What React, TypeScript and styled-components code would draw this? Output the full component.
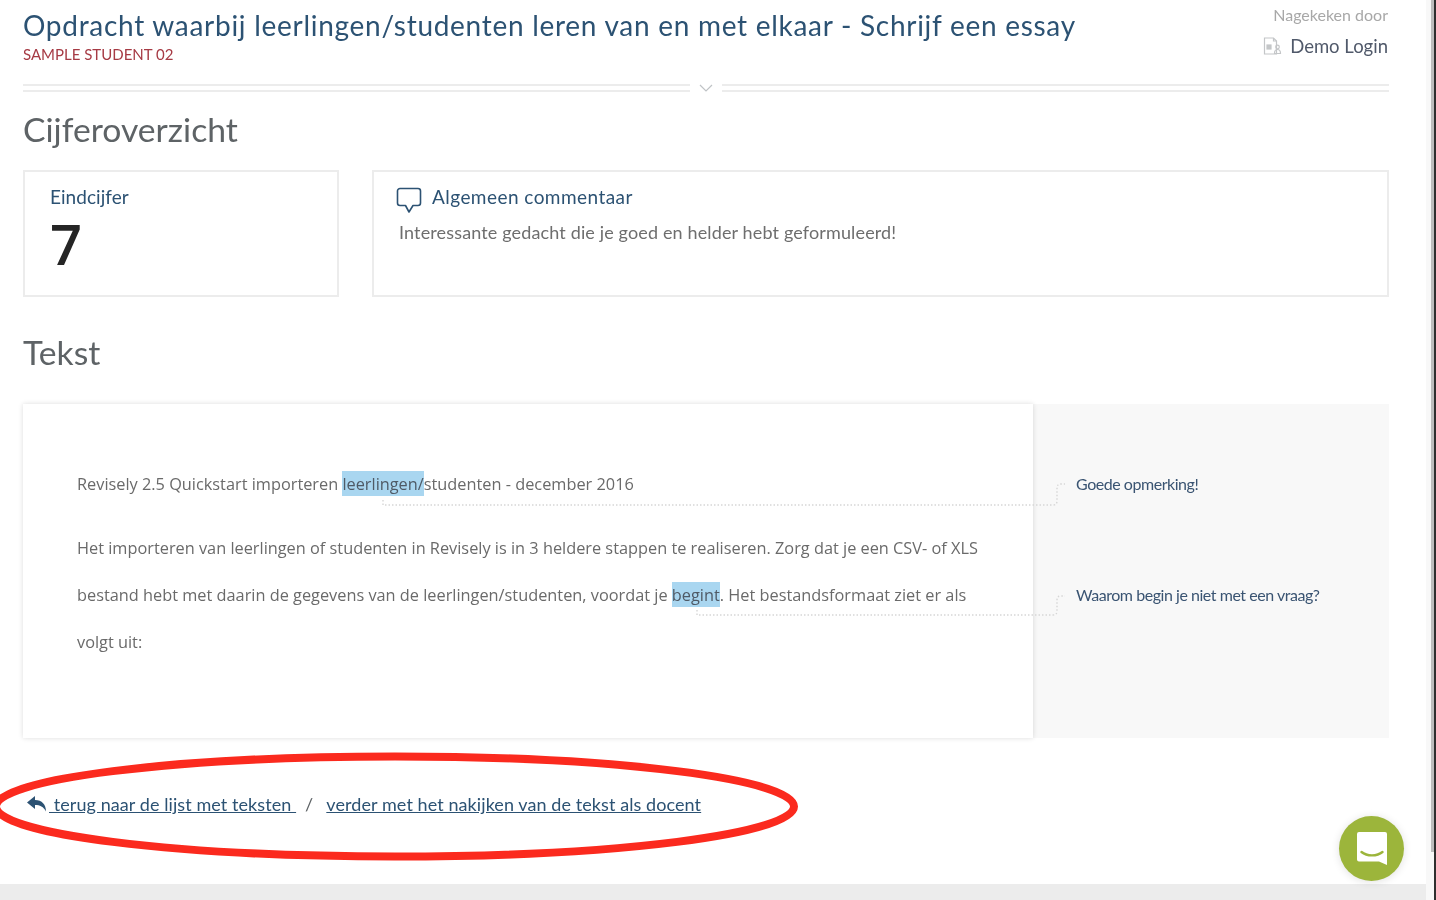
import styled, { createGlobalStyle } from "styled-components";

const GlobalStyle = createGlobalStyle`
  html, body {
    margin: 0;
    padding: 0;
    height: 100%;
    overflow: hidden;
    background: #ffffff;
    font-family: "Lato", "Liberation Sans", sans-serif;
  }
`;

const Screen = styled.div`
  position: relative;
  display: flex;
  width: 1436px;
  height: 900px;
  overflow: hidden;
  background: #ffffff;
  filter: blur(0.45px);
`;

const Page = styled.div`
  display: flex;
  flex-direction: column;
  width: 1426px;
  height: 900px;
`;

const Scrollbar = styled.div`
  box-sizing: border-box;
  width: 8px;
  padding-left: 5px;
  background: #f8f8f8;
`;

const ScrollThumb = styled.div`
  width: 3px;
  height: 852px;
  background: #bdbdbd;
`;

const WindowEdge = styled.div`
  width: 2px;
  background: #2f2f2f;
`;

const Main = styled.main`
  flex: 1;
  padding: 0 37px 0 23px;
`;

const Header = styled.header`
  display: flex;
  justify-content: space-between;
  height: 84px;
`;

const Title = styled.h1`
  margin: 8px 0 0;
  font-size: 28px;
  line-height: 34px;
  font-weight: 400;
  letter-spacing: 0.72px;
  color: #2c5273;
  white-space: nowrap;
`;

const Student = styled.div`
  margin-top: 3px;
  font-size: 15px;
  line-height: 18px;
  color: #a63a44;
`;

const Reviewer = styled.div`
  display: flex;
  flex-direction: column;
  align-items: flex-end;
  padding-top: 6px;
  margin-right: 1px;
`;

const ReviewerLabel = styled.div`
  font-size: 16px;
  line-height: 18px;
  color: #a8a8a8;
`;

const ReviewerName = styled.div`
  display: flex;
  align-items: center;
  gap: 8px;
  margin-top: 11px;
  font-size: 18.5px;
  line-height: 22px;
  color: #50596a;
`;

const Divider = styled.div`
  display: flex;
  align-items: center;
  height: 8px;
`;

const DividerLine = styled.div`
  flex: 1;
  height: 4px;
  border-top: 2px solid #ececec;
  border-bottom: 2px solid #ececec;
`;

const DividerToggle = styled.div`
  display: flex;
  justify-content: center;
  width: 32px;
`;

const SectionTitle = styled.h2<{ $top: number }>`
  margin: ${(p) => p.$top}px 0 0;
  font-size: 33.7px;
  line-height: 40px;
  font-weight: 400;
  color: #5e6366;
`;

const Cards = styled.div`
  display: flex;
  gap: 33px;
  margin-top: 21px;
`;

const Card = styled.section<{ $wide?: boolean }>`
  box-sizing: border-box;
  flex: ${(p) => (p.$wide ? "1" : "0 0 316px")};
  height: 127px;
  padding: ${(p) => (p.$wide ? "15px 22px" : "13px 25px")};
  border: 2px solid #ececec;
`;

const CardLabel = styled.div`
  font-size: 19px;
  line-height: 24px;
  letter-spacing: 0.05px;
  color: #2c5273;
`;

const Grade = styled.div`
  margin-top: 7px;
  font-size: 56px;
  line-height: 54px;
  font-weight: 600;
  color: #252525;
  font-family: "Open Sans", "Liberation Sans", sans-serif;
`;

const CommentHead = styled.div`
  display: flex;
  align-items: flex-start;
  gap: 10px;
`;

const CommentLabel = styled(CardLabel)`
  margin-top: -2px;
  letter-spacing: 0.45px;
`;

const CommentBody = styled.p`
  margin: 6px 0 0 3px;
  font-size: 18px;
  line-height: 24px;
  letter-spacing: 0.14px;
  color: #6e6e6e;
`;

const TextPanel = styled.div`
  display: flex;
  height: 334px;
  margin-top: 32px;
  background: #f8f8f8;
`;

const Essay = styled.article`
  box-sizing: border-box;
  flex: 0 0 1010px;
  padding: 57px 40px 0 54px;
  background: #ffffff;
  box-shadow: 0 0 5px rgba(0, 0, 0, 0.14);
  font-family: "Open Sans", "Liberation Sans", sans-serif;
  font-size: 16.32px;
  color: #6a6a6a;
`;

const EssayHeading = styled.p`
  margin: 0 0 17px;
  line-height: 47px;
  white-space: nowrap;
`;

const EssayLine = styled.div`
  line-height: 47px;
  white-space: nowrap;
`;

const Mark = styled.mark`
  padding: 2px 0 1px;
  background: #a9d6f0;
  color: #4f5a66;
`;

const Notes = styled.aside`
  flex: 1;
  display: flex;
  flex-direction: column;
  padding: 70px 0 0 43px;
`;

const Note = styled.div<{ $top?: number }>`
  margin-top: ${(p) => p.$top ?? 0}px;
  font-size: 16px;
  line-height: 20px;
  color: #3a5472;
  white-space: nowrap;
  letter-spacing: -0.46px;
`;

const Links = styled.nav`
  display: flex;
  align-items: center;
  margin-top: 54px;
  margin-left: 4px;
  font-size: 18px;
  line-height: 24px;
  letter-spacing: 0.08px;
  color: #2c5273;
`;

const BackIcon = styled.svg`
  margin-right: 2px;
`;

const TextLink = styled.a`
  color: #2c5273;
  text-decoration: underline;
  white-space: pre;
`;

const Separator = styled.span`
  margin: 0 13px 0 9px;
  color: #5e6366;
`;

const BottomBar = styled.div`
  height: 16px;
  background: #ececec;
`;

const Overlay = styled.svg`
  position: absolute;
  left: 0;
  top: 0;
  pointer-events: none;
`;

const ChatButton = styled.div`
  position: absolute;
  left: 1339px;
  top: 816px;
  display: flex;
  align-items: center;
  justify-content: center;
  width: 65px;
  height: 65px;
  border-radius: 50%;
  background: #9cb53b;
  box-shadow: 0 1px 8px rgba(0, 0, 0, 0.12);
`;

export default function App() {
  return (
    <Screen>
      <GlobalStyle />
      <Page>
        <Main>
          <Header>
            <div>
              <Title>Opdracht waarbij leerlingen/studenten leren van en met elkaar - Schrijf een essay</Title>
              <Student>SAMPLE STUDENT 02</Student>
            </div>
            <Reviewer>
              <ReviewerLabel>Nagekeken door</ReviewerLabel>
              <ReviewerName>
                <svg width="19" height="18" viewBox="0 0 19 18" fill="none" stroke="#c4c6c8" strokeWidth="1.2">
                  <path d="M1.5 1h9l3 3v13h-12z" />
                  <path d="M10.500 1v3h3" />
                  <rect x="4" y="8" width="4" height="4" fill="#c4c6c8" />
                  <circle cx="14.500" cy="10" r="1.800" />
                  <path d="M11.500 16.500c0-2.400 1.200-4 3-4s3 1.600 3 4z" />
                </svg>
                Demo Login
              </ReviewerName>
            </Reviewer>
          </Header>

          <Divider>
            <DividerLine />
            <DividerToggle>
              <svg width="14" height="8" viewBox="0 0 14 8" fill="none" stroke="#bfc3c6" strokeWidth="1.2">
                <path d="M1 1l6 6 6-6" />
              </svg>
            </DividerToggle>
            <DividerLine />
          </Divider>

          <SectionTitle $top={17}>Cijferoverzicht</SectionTitle>

          <Cards>
            <Card>
              <CardLabel>Eindcijfer</CardLabel>
              <Grade>7</Grade>
            </Card>
            <Card $wide>
              <CommentHead>
                <svg width="26" height="27" viewBox="0 0 26 27" fill="none" stroke="#2c5273" strokeWidth="1.6" strokeLinejoin="round">
                  <path d="M4 1.500h18a2.500 2.500 0 0 1 2.500 2.500v12a2.500 2.500 0 0 1-2.500 2.500h-5L13 25l-3.500-6.500H4A2.500 2.500 0 0 1 1.500 16V4A2.500 2.500 0 0 1 4 1.500z" />
                </svg>
                <CommentLabel>Algemeen commentaar</CommentLabel>
              </CommentHead>
              <CommentBody>Interessante gedacht die je goed en helder hebt geformuleerd!</CommentBody>
            </Card>
          </Cards>

          <SectionTitle $top={35}>Tekst</SectionTitle>

          <TextPanel>
            <Essay>
              <EssayHeading>
                Revisely 2.5 Quickstart importeren <Mark>leerlingen/</Mark>studenten - december 2016
              </EssayHeading>
              <EssayLine>Het importeren van leerlingen of studenten in Revisely is in 3 heldere stappen te realiseren. Zorg dat je een CSV- of XLS</EssayLine>
              <EssayLine>
                bestand hebt met daarin de gegevens van de leerlingen/studenten, voordat je <Mark>begint</Mark>. Het bestandsformaat ziet er als
              </EssayLine>
              <EssayLine>volgt uit:</EssayLine>
            </Essay>
            <Notes>
              <Note>Goede opmerking!</Note>
              <Note $top={91}>Waarom begin je niet met een vraag?</Note>
            </Notes>
          </TextPanel>

          <Links>
            <BackIcon width="20" height="18" viewBox="0 0 20 18" fill="#2c5273">
              <path d="M8 1L0 7.500 8 14v-4c5 0 8.500 1.500 11 6.500C19 9.500 15 5 8 5z" />
            </BackIcon>
            <TextLink href="#"> terug naar de lijst met teksten </TextLink>
            <Separator>/</Separator>
            <TextLink href="#">verder met het nakijken van de tekst als docent</TextLink>
          </Links>
        </Main>
        <BottomBar />
      </Page>
      <Scrollbar>
        <ScrollThumb />
      </Scrollbar>
      <WindowEdge />

      <Overlay width="1436" height="900" viewBox="0 0 1436 900">
        <g fill="none" stroke="#d6d6d6" strokeWidth="1.4" strokeDasharray="1.500 2">
          <path d="M383 500v5h670q4 0 4-4v-13q0-4 4-4h4" />
          <path d="M697 610v5h356q4 0 4-4v-11q0-4 4-4h4" />
        </g>
        <ellipse cx="395" cy="806.500" rx="399" ry="50" fill="none" stroke="#fb2a1e" strokeWidth="8" />
      </Overlay>

      <ChatButton>
        <svg width="32" height="35" viewBox="0 0 32 35" fill="#ffffff">
          <path d="M3 1h26a2 2 0 0 1 2 2v31l-8-3.500H3a2 2 0 0 1-2-2V3a2 2 0 0 1 2-2z" />
          <path d="M5.500 21c5.500 4.500 15.500 4.500 21 0" fill="none" stroke="#9cb53b" strokeWidth="2.400" strokeLinecap="round" />
        </svg>
      </ChatButton>
    </Screen>
  );
}
